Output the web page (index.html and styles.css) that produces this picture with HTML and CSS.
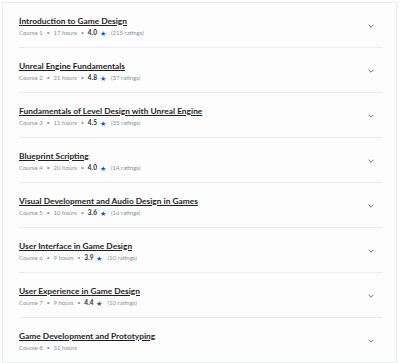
FILE: index.html
```html
<!DOCTYPE html>
<html>
<head>
<meta charset="utf-8">
<link rel="stylesheet" href="styles.css">
</head>
<body>
<div class="card">
  <div class="row">
    <div class="info">
      <a class="title">Introduction to Game Design</a>
      <div class="meta"><span>Course 1</span><span class="dot">•</span><span>17 hours</span><span class="dot">•</span><b>4.0</b><span class="star">★</span><span class="count">(215 ratings)</span></div>
    </div>
    <svg class="chev" viewBox="0 0 10 6"><path d="M1 1l4 4 4-4" fill="none" stroke="#5b6a86" stroke-width="1.6"/></svg>
  </div>
  <div class="row">
    <div class="info">
      <a class="title">Unreal Engine Fundamentals</a>
      <div class="meta"><span>Course 2</span><span class="dot">•</span><span>21 hours</span><span class="dot">•</span><b>4.8</b><span class="star">★</span><span class="count">(37 ratings)</span></div>
    </div>
    <svg class="chev" viewBox="0 0 10 6"><path d="M1 1l4 4 4-4" fill="none" stroke="#5b6a86" stroke-width="1.6"/></svg>
  </div>
  <div class="row">
    <div class="info">
      <a class="title">Fundamentals of Level Design with Unreal Engine</a>
      <div class="meta"><span>Course 3</span><span class="dot">•</span><span>11 hours</span><span class="dot">•</span><b>4.5</b><span class="star">★</span><span class="count">(35 ratings)</span></div>
    </div>
    <svg class="chev" viewBox="0 0 10 6"><path d="M1 1l4 4 4-4" fill="none" stroke="#5b6a86" stroke-width="1.6"/></svg>
  </div>
  <div class="row">
    <div class="info">
      <a class="title">Blueprint Scripting</a>
      <div class="meta"><span>Course 4</span><span class="dot">•</span><span>20 hours</span><span class="dot">•</span><b>4.0</b><span class="star">★</span><span class="count">(14 ratings)</span></div>
    </div>
    <svg class="chev" viewBox="0 0 10 6"><path d="M1 1l4 4 4-4" fill="none" stroke="#5b6a86" stroke-width="1.6"/></svg>
  </div>
  <div class="row">
    <div class="info">
      <a class="title">Visual Development and Audio Design in Games</a>
      <div class="meta"><span>Course 5</span><span class="dot">•</span><span>10 hours</span><span class="dot">•</span><b>3.6</b><span class="star">★</span><span class="count">(16 ratings)</span></div>
    </div>
    <svg class="chev" viewBox="0 0 10 6"><path d="M1 1l4 4 4-4" fill="none" stroke="#5b6a86" stroke-width="1.6"/></svg>
  </div>
  <div class="row">
    <div class="info">
      <a class="title">User Interface in Game Design</a>
      <div class="meta"><span>Course 6</span><span class="dot">•</span><span>9 hours</span><span class="dot">•</span><b>3.9</b><span class="star">★</span><span class="count">(10 ratings)</span></div>
    </div>
    <svg class="chev" viewBox="0 0 10 6"><path d="M1 1l4 4 4-4" fill="none" stroke="#5b6a86" stroke-width="1.6"/></svg>
  </div>
  <div class="row">
    <div class="info">
      <a class="title">User Experience in Game Design</a>
      <div class="meta"><span>Course 7</span><span class="dot">•</span><span>9 hours</span><span class="dot">•</span><b>4.4</b><span class="star">★</span><span class="count">(10 ratings)</span></div>
    </div>
    <svg class="chev" viewBox="0 0 10 6"><path d="M1 1l4 4 4-4" fill="none" stroke="#5b6a86" stroke-width="1.6"/></svg>
  </div>
  <div class="row">
    <div class="info">
      <a class="title">Game Development and Prototyping</a>
      <div class="meta"><span>Course 8</span><span class="dot">•</span><span>31 hours</span></div>
    </div>
    <svg class="chev" viewBox="0 0 10 6"><path d="M1 1l4 4 4-4" fill="none" stroke="#5b6a86" stroke-width="1.6"/></svg>
  </div>
</div>
</body>
</html>
```
FILE: styles.css
```css
html, body {
  margin: 0;
  padding: 0;
  background: #ffffff;
}
body {
  font-family: "Lato", "Open Sans", sans-serif;
  padding: 2px 3px 0 2px;
}
.card {
  border: 1px solid #ebedf0;
  background: #fdfdfe;
  padding: 0 14px 0 16px;
  box-shadow: 0 0 2px rgba(0,0,0,0.04);
}
.row {
  display: flex;
  align-items: center;
  justify-content: space-between;
  height: 45px;
  box-sizing: border-box;
  border-bottom: 1px solid #e8eaee;
}
.row:last-child {
  border-bottom: none;
  height: 44px;
}
.info {
  display: flex;
  flex-direction: column;
  padding-top: 2px;
}
.title {
  font-weight: 700;
  font-size: 8.4px;
  line-height: 12px;
  color: #1f1f1f;
  text-decoration: underline;
  text-underline-offset: 1px;
}
.meta {
  display: flex;
  align-items: center;
  margin-top: 1px;
  font-size: 6px;
  line-height: 10px;
  color: #8a8f96;
}
.dot {
  margin: 0 4px;
  font-size: 5px;
}
.meta b {
  color: #2b2b2b;
  font-weight: 700;
  font-size: 6.5px;
}
.star {
  color: #0056d2;
  margin: 0 5px 0 3px;
  font-size: 7px;
}
.chev {
  width: 6px;
  height: 4px;
  margin-right: 8px;
  margin-top: 2px;
}
```
